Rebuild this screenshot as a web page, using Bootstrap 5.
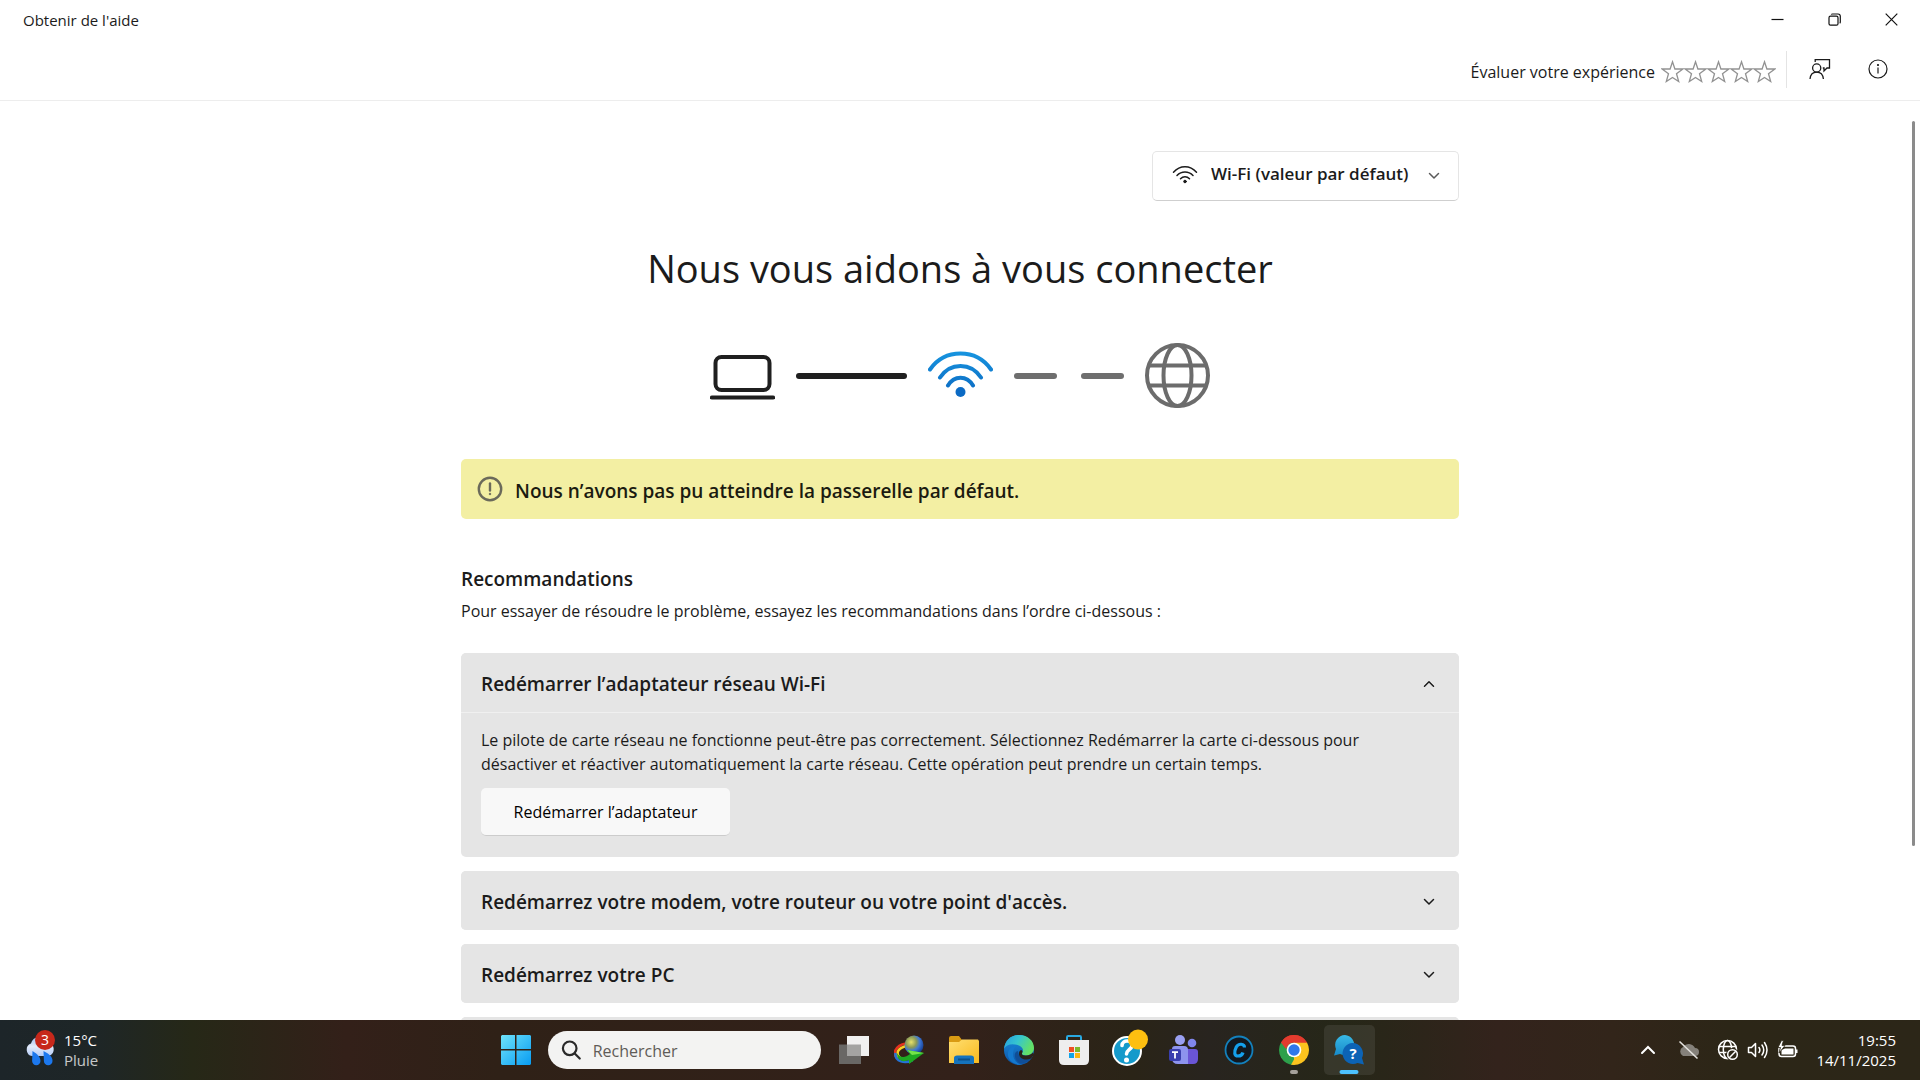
<!DOCTYPE html>
<html lang="fr">
<head>
<meta charset="utf-8">
<meta name="viewport" content="width=device-width, initial-scale=1">
<title>Obtenir de l'aide</title>
<link href="https://cdn.jsdelivr.net/npm/bootstrap@5.3.0/dist/css/bootstrap.min.css" rel="stylesheet">
<style>
  body { font-family: "Open Sans", "Noto Sans", sans-serif; font-size: 16px; line-height: 24px; color: #1b1b1b; background: #fff; }
  svg { display: block; flex: none; }
  .plain { border: 0; background: transparent; padding: 0; color: inherit; display: flex; align-items: center; justify-content: center; }
  .title-bar { height: 40px; font-size: 15px; padding-left: 23px; }
  .caption-btn { width: 57px; height: 38px; }
  .tool-bar { height: 61px; border-bottom: 1px solid #ededed; padding-right: 13px; }
  .rating { padding-top: 11px; }
  .rating-label { padding: 5px 6px 0 0; }
  .rule { width: 1px; height: 37px; background: #e4e4e4; margin: 0 4px 0 10px; }
  .star { width: 23px; height: 24px; }
  .tool-btn { width: 58px; height: 42px; }
  .page-scroll { overflow-y: auto; scrollbar-width: none; }
  .page-scroll::-webkit-scrollbar { display: none; }
  .scroll-thumb { position: absolute; right: 5px; top: 20px; width: 3px; height: 725px; border-radius: 2px; background: #8b8b8b; }
  .page-col { max-width: 998px; padding-top: 50px; }
  .net-pick { width: 307px; height: 50px; border: 1px solid #e5e5e5; border-bottom-color: #cfcfcf; border-radius: 5px; padding: 0 18px 0 19px; }
  .net-pick label { padding-bottom: 2px; }
  .net-pick select { appearance: none; border: 0; background: transparent; font-size: 17px; font-weight: 600; color: #1b1b1b; padding: 0 0 4px; outline-offset: 4px; }
  h1 { font-size: 38px; line-height: 52px; font-weight: 400; margin: 41px 0 49px; }
  .chain { gap: 21px; height: 65px; margin-bottom: 51px; }
  .link-bar { height: 6px; border-radius: 3px; background: #1f1f1f; width: 111px; }
  .link-bar.off { width: 43px; background: #6e6e6e; }
  .link-bar.off + .link-bar.off { margin-left: 3px; }
  .notice { height: 60px; border-radius: 5px; background: #f3efa3; padding: 0 16px; gap: 12px; font-size: 19px; font-weight: 600; margin-bottom: 46px; color: #1b1b10; }
  .notice span { padding-top: 4px; }
  h2.reco { font-size: 19px; line-height: 28px; font-weight: 600; margin: 0 0 6px; }
  .accordion { --bs-accordion-bg: #e5e5e5; --bs-accordion-border-color: #ececec; --bs-accordion-btn-color: #1b1b1b; --bs-accordion-btn-bg: #e5e5e5; --bs-accordion-active-bg: #e5e5e5; --bs-accordion-active-color: #1b1b1b; --bs-accordion-btn-padding-x: 20px; --bs-accordion-btn-padding-y: 0; gap: 14px; margin-top: 30px; }
  .accordion .accordion-item { border: 0; border-radius: 5px; overflow: hidden; color: #1b1b1b; }
  .accordion .accordion-button { height: 59px; font-size: 19px; font-weight: 600; padding: 3px 24px 0 20px; box-shadow: none; }
  .accordion .accordion-button::after { display: none; }
  .accordion .accordion-body { border-top: 1px solid #f0f0f0; padding: 15px 40px 21px 20px; }
  .restart { width: 249px; height: 48px; border-radius: 5px; background: #f8f8f8; border: 0; border-bottom: 1px solid #cccccc; margin-top: 12px; }
  .task-bar { height: 60px; color: #fff; font-size: 15px; line-height: 20px; background: linear-gradient(90deg, #1d2529 0, #1e2627 5%, #262817 10%, #332019 18%, #2f2117 26%, #33211a 50%, #2a2417 59%, #28241f 63%, #262718 70%, #33231c 78%, #32251a 84%, #2c2617 90%, #2c2618 100%); padding-right: 24px; }
  .weather { width: 232px; padding-left: 23px; gap: 9px; justify-content: flex-start; text-align: left; }
  .app { width: 55px; height: 50px; }
  .app.active { background: #ffffff14; width: 51px; border-radius: 5px; margin: 0 2px; position: relative; }
  .running { position: relative; }
  .running::after, .app.active::after { content: ""; position: absolute; bottom: 1px; left: 50%; transform: translateX(-50%); width: 8px; height: 4px; border-radius: 2px; background: #a5a19b; }
  .app.active::after { width: 19px; background: #4cc2ff; }
  .find { width: 273px; height: 38px; border-radius: 19px; background: #f3f3f2; padding: 0 16px 0 13px; gap: 12px; margin: 0 6px 0 4px; }
  .find input { border: 0; background: transparent; width: 100%; outline: 0; font-size: 16px; padding: 2px 0 0; color: #555; }
  .find input::placeholder { color: #5f5c58; opacity: 1; }
  .tray { width: 30px; height: 40px; }
  .tray-cloud { width: 40px; padding-left: 8px; margin: 0 8px 0 2px; }
  .clock { margin-left: 13px; }
</style>
</head>
<body class="vh-100 d-flex flex-column overflow-hidden">

<svg width="0" height="0" class="position-absolute" aria-hidden="true">
  <defs>
    <symbol id="i-down" viewBox="0 0 12 12"><path d="M1.500 3.500 6 8l4.500-4.500" fill="none" stroke="currentColor" stroke-width="1.500" stroke-linecap="round" stroke-linejoin="round"/></symbol>
    <symbol id="i-star" viewBox="0 0 23 24"><path d="M11.500 1.800 13.900 9H21.800L15.500 13.700 17.700 21.500 11.500 17.500 5.300 21.500 7.500 13.700 1.200 9H9.100Z" fill="#fff" stroke="#929292" stroke-width="1.300" stroke-linejoin="miter"/></symbol>
  </defs>
</svg>

<header class="flex-shrink-0">
  <div class="title-bar d-flex justify-content-between">
    <span class="d-flex align-items-center">Obtenir de l'aide</span>
    <div class="d-flex">
      <button class="plain caption-btn" type="button" aria-label="Réduire"><svg width="13" height="13"><path d="M.5 6.500h12" stroke="#111" stroke-width="1.200"/></svg></button>
      <button class="plain caption-btn" type="button" aria-label="Niveau inférieur"><svg width="13" height="13" fill="none" stroke="#111" stroke-width="1.200"><rect x="1" y="3.200" width="9" height="9" rx="1.500"/><path d="M3.200 1.500Q3.600 1 4.500 1H10a2.300 2.300 0 0 1 2.300 2.300V9q0 .8-.6 1.200"/></svg></button>
      <button class="plain caption-btn" type="button" aria-label="Fermer"><svg width="13" height="13"><path d="M.7.700l11.600 11.600M12.300.7.700 12.300" stroke="#111" stroke-width="1.200"/></svg></button>
    </div>
  </div>
  <div class="tool-bar d-flex justify-content-end align-items-start">
    <div class="rating d-flex align-items-center">
      <span class="rating-label">Évaluer votre expérience</span>
      <div class="d-flex pt-1" role="group" aria-label="Note">
        <button class="plain star" type="button" aria-label="1 étoile"><svg width="23" height="24"><use href="#i-star"/></svg></button>
        <button class="plain star" type="button" aria-label="2 étoiles"><svg width="23" height="24"><use href="#i-star"/></svg></button>
        <button class="plain star" type="button" aria-label="3 étoiles"><svg width="23" height="24"><use href="#i-star"/></svg></button>
        <button class="plain star" type="button" aria-label="4 étoiles"><svg width="23" height="24"><use href="#i-star"/></svg></button>
        <button class="plain star" type="button" aria-label="5 étoiles"><svg width="23" height="24"><use href="#i-star"/></svg></button>
      </div>
      <div class="rule"></div>
    </div>
    <div class="d-flex pt-2">
      <button class="plain tool-btn" type="button" aria-label="Commentaires"><svg width="22" height="22" fill="none" stroke="#1b1b1b" stroke-width="1.300"><circle cx="7.700" cy="10" r="4.100"/><path d="M1 21c.4-4.200 3-6.900 6.700-6.900s6.300 2.700 6.700 6.900M6.200 4V1.700H20.500V10H18l-3 3V10H13.800"/></svg></button>
      <button class="plain tool-btn" type="button" aria-label="Informations"><svg width="20" height="20" fill="none" stroke="#1b1b1b" stroke-width="1.200"><circle cx="10" cy="10" r="9"/><path d="M10 8.500V14.500"/><circle cx="10" cy="6" r=".5" fill="#1b1b1b"/></svg></button>
    </div>
  </div>
</header>

<div class="position-relative flex-grow-1 overflow-hidden d-flex">
<main class="page-scroll w-100">
  <div class="page-col mx-auto">
    <div class="d-flex justify-content-end">
      <div class="net-pick d-flex align-items-center">
        <label for="net" aria-label="Type de connexion"><svg width="27" height="20" fill="none" stroke="#1b1b1b" stroke-width="1.500" stroke-linecap="round"><path d="M1.500 7.200C8-.1 18-.1 24.500 7.200M5 10.500c4.500-4.700 11.500-4.700 16 0M8.500 13.700c2.600-2.700 6.400-2.700 9 0"/><circle cx="13" cy="16.500" r="1.300" fill="#1b1b1b" stroke-width="1"/></svg></label>
        <select id="net" class="flex-grow-1 ms-2 ps-1"><option>Wi-Fi (valeur par défaut)</option></select>
        <svg width="12" height="12" color="#5a5a5a"><use href="#i-down"/></svg>
      </div>
    </div>

    <h1 class="text-center">Nous vous aidons à vous connecter</h1>

    <div class="chain d-flex justify-content-center align-items-center">
      <svg width="65" height="65" fill="none" stroke="#1f1f1f"><rect x="5.500" y="14" width="54" height="33" rx="6" stroke-width="4"/><path d="M2 54.500h61" stroke-width="4.200" stroke-linecap="round"/></svg>
      <div class="link-bar"></div>
      <svg width="65" height="65" fill="none"><defs><linearGradient id="wf" gradientUnits="userSpaceOnUse" x1="0" y1="8" x2="0" y2="55"><stop stop-color="#1795e0"/><stop offset="1" stop-color="#0b66bf"/></linearGradient></defs><g stroke="url(#wf)" stroke-width="4" stroke-linecap="round"><path d="M2 26.500C17 5.300 48 5.300 63 26.500M12 34.500c10-15.500 31-15.500 41 0M20 42.500c6-10.500 19-10.500 25 0"/></g><circle cx="32.500" cy="49" r="5" fill="#0b6ac4"/></svg>
      <div class="link-bar off"></div>
      <div class="link-bar off"></div>
      <svg width="65" height="65" fill="none" stroke="#6c6c6c" stroke-width="4"><circle cx="32.500" cy="32.500" r="30.500"/><ellipse cx="32.500" cy="32.500" rx="14" ry="30.500"/><path d="M4 22.500h57M4 42.500h57"/></svg>
    </div>

    <div class="notice d-flex align-items-center" role="alert">
      <svg width="26" height="26" fill="none" stroke="#6b6a5a" stroke-width="2.400"><circle cx="13" cy="13" r="11.200"/><path d="M13 7.500v7" stroke-width="2.400" stroke-linecap="round"/><circle cx="13" cy="18" r=".8" fill="#6b6a5a" stroke-width="1"/></svg>
      <span>Nous n’avons pas pu atteindre la passerelle par défaut.</span>
    </div>

    <h2 class="reco">Recommandations</h2>
    <p class="m-0">Pour essayer de résoudre le problème, essayez les recommandations dans l’ordre ci-dessous :</p>

    <div class="accordion d-flex flex-column" id="recos">
      <section class="accordion-item">
        <h3 class="accordion-header"><button class="accordion-button justify-content-between" type="button" data-bs-toggle="collapse" data-bs-target="#r1" aria-expanded="true" aria-controls="r1">Redémarrer l’adaptateur réseau Wi-Fi<svg width="12" height="12"><path d="M1.500 8.200 6 3.700l4.500 4.500" fill="none" stroke="currentColor" stroke-width="1.500" stroke-linecap="round" stroke-linejoin="round"/></svg></button></h3>
        <div id="r1" class="accordion-collapse collapse show">
          <div class="accordion-body">
            <p class="m-0">Le pilote de carte réseau ne fonctionne peut-être pas correctement. Sélectionnez Redémarrer la carte ci-dessous pour désactiver et réactiver automatiquement la carte réseau. Cette opération peut prendre un certain temps.</p>
            <button type="button" class="restart">Redémarrer l’adaptateur</button>
          </div>
        </div>
      </section>
      <section class="accordion-item"><h3 class="accordion-header"><button class="accordion-button collapsed justify-content-between" type="button" aria-expanded="false">Redémarrez votre modem, votre routeur ou votre point d'accès.<svg width="12" height="12"><use href="#i-down"/></svg></button></h3></section>
      <section class="accordion-item"><h3 class="accordion-header"><button class="accordion-button collapsed justify-content-between" type="button" aria-expanded="false">Redémarrez votre PC<svg width="12" height="12"><use href="#i-down"/></svg></button></h3></section>
      <section class="accordion-item"><h3 class="accordion-header"><button class="accordion-button collapsed" type="button" aria-expanded="false" aria-label="Recommandation suivante"></button></h3></section>
    </div>
  </div>
</main>
<div class="scroll-thumb"></div>
</div>

<footer class="task-bar flex-shrink-0 d-flex justify-content-between align-items-center">
  <button class="plain weather" type="button">
    <svg width="32" height="40"><defs><linearGradient id="cl" x1="0" y1="0" x2="0" y2="1"><stop stop-color="#9dbdf0"/><stop offset=".5" stop-color="#e3ecfb"/><stop offset="1" stop-color="#b4cbf6"/></linearGradient></defs><path d="M9 26a6.500 6.500 0 0 1-1-12.500A9 9 0 0 1 25 12.500a7 7 0 0 1 1 13.500Z" fill="url(#cl)"/><path d="M9.500 21c5 3 8 6 8 10a4.200 4.200 0 0 1-8.400 0ZM20.500 21c6 3 9 6 9 10a4.300 4.300 0 0 1-8.600 0Z" fill="#1c78ee"/><circle cx="22" cy="10" r="10" fill="#c7281b"/><text x="22" y="15" text-anchor="middle" font-size="14" fill="#fff">3</text></svg>
    <span>15°C<br><span class="opacity-75">Pluie</span></span>
  </button>

  <nav class="d-flex align-items-center" aria-label="Barre des tâches">
    <button class="plain app" type="button" aria-label="Démarrer"><svg width="30" height="30"><defs><linearGradient id="wi" x1="0" y1="0" x2="1" y2="1" gradientUnits="objectBoundingBox"><stop stop-color="#6fe3fb"/><stop offset="1" stop-color="#089cf2"/></linearGradient></defs><path d="M1 0H14V14H0V1ZM15.500 0H29L30 1V14H15.500ZM0 15.500H14V30H1L0 29ZM15.500 15.500H30V29L29 30H15.500Z" fill="url(#wi)"/></svg></button>
    <div class="find d-flex align-items-center">
      <svg width="20" height="20" fill="none" stroke="#2a2a2a" stroke-width="2.200" stroke-linecap="round"><circle cx="8.700" cy="8.300" r="6.800"/><path d="m13.700 13.500 5 5"/></svg>
      <input type="search" placeholder="Rechercher" aria-label="Rechercher">
    </div>
    <button class="plain app" type="button" aria-label="Vue des tâches"><svg width="30" height="28"><path d="M0 8.500H22V28H0Z" fill="#696765"/><path d="M8 0H30V20H8Z" fill="#f1f0f0"/><path d="M8 8.500H22V20H8Z" fill="#a4a3a2"/></svg></button>
    <button class="plain app" type="button" aria-label="Internet Download Manager"><svg width="30" height="30"><defs><radialGradient id="gl" cx=".35" cy=".35" r=".7"><stop stop-color="#e8e26a"/><stop offset=".4" stop-color="#8a9a58"/><stop offset=".65" stop-color="#3c78d8"/><stop offset="1" stop-color="#173f92"/></radialGradient></defs><g fill="none" stroke-width="2.600"><path d="M12 8.500C1 10.500-2 19 4 23.500" stroke="#e5321f"/><path d="M12.500 11C4 13 1 18 6 23" stroke="#f8cf27"/><path d="M1.500 18c-1 9 10 11 17 7" stroke="#2473d6"/></g><circle cx="20" cy="10" r="9.500" fill="url(#gl)"/><path d="M3 18c3 5 8 5 13 1l-3-4 17 3-15 11 0-4C8 28 3 25 3 18Z" fill="#1eaa22"/><path d="m13 15 17 3-12 2Z" fill="#73e44a"/></svg></button>
    <button class="plain app" type="button" aria-label="Explorateur de fichiers"><svg width="30" height="28"><defs><linearGradient id="fo" x1="0" y1="0" x2="1" y2="1"><stop stop-color="#ffdf72"/><stop offset="1" stop-color="#f8b91e"/></linearGradient></defs><path d="M0 2Q0 0 2 0H10L13 4H18V9H0Z" fill="#d99b13"/><path d="M0 6H10L13 3.500H29L30 5V27H0Z" fill="url(#fo)"/><path d="M5 28V22Q5 19.500 8 19.500H22Q25 19.500 25 22V28Z" fill="#1573bd"/><path d="M9 23.500H21" stroke="#0c5088" stroke-width="2"/></svg></button>
    <button class="plain app" type="button" aria-label="Microsoft Edge"><svg width="30" height="30"><defs><linearGradient id="e1" x1="0" y1="0" x2="1" y2=".4"><stop stop-color="#259be2"/><stop offset=".5" stop-color="#36c6cf"/><stop offset="1" stop-color="#64e065"/></linearGradient><linearGradient id="e2" x1="0" y1="0" x2="0" y2="1"><stop stop-color="#1b90df"/><stop offset="1" stop-color="#0c52a4"/></linearGradient></defs><circle cx="15" cy="15" r="15" fill="url(#e2)"/><path d="M0 14C1 5 7 0 15 0c9 0 15 6 15 13 0 5-4 7.500-8 7.500-3 0-4.500-1-4-2.500 2-2 1-6-3-7.500C9 8 2 9 0 14Z" fill="url(#e1)"/><path d="M10 14c-3 7 1 15 9 15.500C10 31 3 25 4 18c.5-5 5-8 10-7.500-2 .5-3 1.500-4 3.500Z" fill="#1479ce"/><path d="M14 16c0 6 5 9 12 6l2 0c-3 5-8 7-12 6-6-3-7-11-2-12Z" fill="#104e97"/><path d="M18 18c-.5 1.800 1 2.700 4 2.500 3 0 6-1.500 7-3l1 2-3 4c-5 2-11 1-12-4-.4-2 .5-4 2-4.500 1.500.5 2 2 1 3Z" fill="#2b2219"/></svg></button>
    <button class="plain app" type="button" aria-label="Microsoft Store"><svg width="30" height="30"><path d="M8 7V2.200Q8 1 9.200 1H20.800Q22 1 22 2.200V7" fill="none" stroke="#29a9e1" stroke-width="2"/><path d="M0 5H30V25Q30 30 25 30H5Q0 30 0 25Z" fill="#eeeeee"/><path d="M10 12h5v5h-5z" fill="#ee5024"/><path d="M16 12h5v5h-5z" fill="#7db92b"/><path d="M10 18h5v5h-5z" fill="#12a4e8"/><path d="M16 18h5v5h-5z" fill="#fcb712"/></svg></button>
    <button class="plain app pb-1" type="button" aria-label="Aide"><svg width="38" height="38"><circle cx="17" cy="22" r="14" fill="#159acb" stroke="#fff" stroke-width="2"/><path d="M12 16.500c.5-6.500 11-5.500 10 .5-.9 3.700-5.500 4-5.500 8" fill="none" stroke="#fff" stroke-width="3.600" stroke-linecap="round"/><circle cx="16.500" cy="31" r="2.500" fill="#fff"/><circle cx="28" cy="10.500" r="10" fill="#fdbf10"/></svg></button>
    <button class="plain app" type="button" aria-label="Microsoft Teams"><svg width="30" height="30"><circle cx="11" cy="5" r="5" fill="#9aa0f2"/><circle cx="23" cy="8" r="4.300" fill="#8187ec"/><path d="M17 14H26Q29 14 29 17V24Q29 29 24 29H17Z" fill="#6a55d6"/><path d="M3 14Q3 11 6 11H15Q19 11 19 15V29H9Q3 29 3 23Z" fill="#8d93ee"/><rect x="0" y="14" width="12" height="12" rx="2" fill="#3a3fae"/><path d="M3 17.200H9M6 17.200V23.500" stroke="#fff" stroke-width="1.800"/></svg></button>
    <button class="plain app" type="button" aria-label="C"><svg width="30" height="30"><circle cx="15" cy="15" r="13.500" fill="#111820" stroke="#1381bd" stroke-width="1.800"/><path d="M20.500 12.500C20.500 8.500 14.500 8 12.300 12 9.500 17.500 10.500 21 14 21c2.500 0 4.300-1 5-3.500" fill="none" stroke="#14a0ee" stroke-width="3.200"/></svg></button>
    <button class="plain app running" type="button" aria-label="Google Chrome"><svg width="30" height="30"><path d="M15 15 2.010 7.500A15 15 0 0 1 27.990 7.500Z" fill="#e33b2e"/><path d="M15 15 27.990 7.500A15 15 0 0 1 15 30Z" fill="#fcc31e"/><path d="M15 15 15 30A15 15 0 0 1 2.010 7.500Z" fill="#2da04b"/><path d="M15 7.500H28L22 18.500Z" fill="#fcc31e"/><path d="M2 7.500 8.500 18.800 15 15V7.500Z" fill="#2da04b"/><path d="M2 7.500A15 15 0 0 1 28 7.500H15A7.500 7.500 0 0 0 8.500 11.500L7 14Z" fill="#e33b2e"/><path d="M21.500 18.700 15 30 12 29.700 17 21Z" fill="#fcc31e"/><circle cx="15" cy="15" r="7.300" fill="#fff"/><circle cx="15" cy="15" r="5.700" fill="#2f78ea"/></svg></button>
    <button class="plain app active" type="button" aria-label="Obtenir de l'aide"><svg width="30" height="30"><defs><linearGradient id="ga" x1="0" y1="0" x2="0" y2="1"><stop stop-color="#38b9e6"/><stop offset="1" stop-color="#1789c8"/></linearGradient></defs><path d="M11 0A10 10 0 1 1 6 19L0 20.500 2 14A10 10 0 0 1 11 0Z" fill="url(#ga)"/><path d="M18.500 8A10.500 10.500 0 0 1 28 23L30 29.500 23.500 28A10.500 10.500 0 1 1 18.500 8Z" fill="#0c63b5"/><text x="19" y="24" text-anchor="middle" font-size="15" font-weight="700" fill="#fff">?</text></svg></button>
  </nav>

  <div class="d-flex align-items-center">
    <button class="plain tray" type="button" aria-label="Icônes masquées"><svg width="16" height="12"><path d="m2 9 6-6 6 6" fill="none" stroke="#fff" stroke-width="2" stroke-linecap="round"/></svg></button>
    <button class="plain tray tray-cloud" type="button" aria-label="OneDrive"><svg width="22" height="20"><path d="M5 16a5 5 0 0 1 0-9 7 7 0 0 1 12 1 4 4 0 0 1 0 8Z" fill="#85817a"/><path d="m1.500 1.500 18 17" stroke="#e5e3df" stroke-width="1.600"/></svg></button>
    <button class="plain tray" type="button" aria-label="Réseau"><svg width="22" height="22" fill="none" stroke="#fff" stroke-width="1.500"><circle cx="10.500" cy="10.500" r="9"/><ellipse cx="10.500" cy="10.500" rx="4.200" ry="9"/><path d="M2 7.500h17M2 13.500h17"/><circle cx="15.500" cy="15.500" r="6.500" fill="#2c2617" stroke="none"/><circle cx="15.500" cy="15.500" r="4.800"/><path d="m12.300 18.700 6.400-6.400"/></svg></button>
    <button class="plain tray" type="button" aria-label="Volume"><svg width="22" height="20" fill="none" stroke="#fff" stroke-width="1.500" stroke-linejoin="round" stroke-linecap="round"><path d="M1.500 7.500H4.500L8.500 3.500V16.500L4.500 12.500H1.500ZM12 7.500q1.800 2.500 0 5M15 5q3.500 5 0 10M17.500 2.500q5 7.500 0 15"/></svg></button>
    <button class="plain tray" type="button" aria-label="Batterie"><svg width="22" height="20"><rect x="2" y="6" width="16.500" height="10.500" rx="2.500" fill="none" stroke="#fff" stroke-width="1.500"/><path d="M4.500 14.500V10L8 8.500H16.500V14.500Z" fill="#fff"/><path d="M19.500 9.500v3.500" stroke="#fff" stroke-width="2"/><path d="M4.500.500 1 7.500H3.500L2 13 8 5.500H5L6.500.500Z" fill="#fff" stroke="#2c2617" stroke-width=".8"/></svg></button>
    <button class="plain text-end clock" type="button"><span>19:55<br>14/11/2025</span></button>
  </div>
</footer>

<script src="https://cdn.jsdelivr.net/npm/bootstrap@5.3.0/dist/js/bootstrap.bundle.min.js"></script>
</body>
</html>
